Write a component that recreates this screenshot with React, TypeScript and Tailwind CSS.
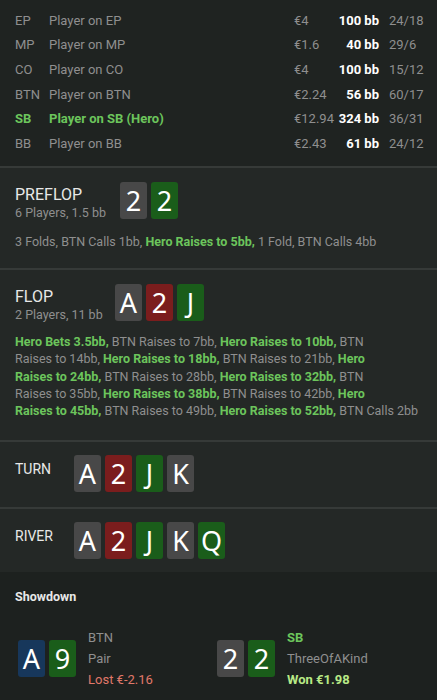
import React from 'react';

type Suit = 'gray' | 'red' | 'green' | 'blue';

const suitBg: Record<Suit, string> = {
  gray: 'bg-[#484848]',
  red: 'bg-[#7b1d1d]',
  green: 'bg-[#1a5d1a]',
  blue: 'bg-[#17375b]',
};

const players = [
  { pos: 'EP', name: 'Player on EP', stack: '€4', bb: '100 bb', stats: '24/18' },
  { pos: 'MP', name: 'Player on MP', stack: '€1.6', bb: '40 bb', stats: '29/6' },
  { pos: 'CO', name: 'Player on CO', stack: '€4', bb: '100 bb', stats: '15/12' },
  { pos: 'BTN', name: 'Player on BTN', stack: '€2.24', bb: '56 bb', stats: '60/17' },
  { pos: 'SB', name: 'Player on SB (Hero)', stack: '€12.94', bb: '324 bb', stats: '36/31', hero: true },
  { pos: 'BB', name: 'Player on BB', stack: '€2.43', bb: '61 bb', stats: '24/12' },
];

const Card = ({ rank, suit }: { rank: string; suit: Suit }) => (
  <div
    className={`w-[27px] h-[37px] rounded-[3px] flex items-center justify-center text-white text-[27px] leading-none font-['Noto_Sans',sans-serif] ${suitBg[suit]}`}
  >
    {rank}
  </div>
);

const Cards = ({ cards }: { cards: [string, Suit][] }) => (
  <div className="flex gap-[4px]">
    {cards.map(([r, s], i) => (
      <Card key={i} rank={r} suit={s} />
    ))}
  </div>
);

const Hero = ({ children }: { children: React.ReactNode }) => (
  <span className="font-bold text-[#6cc55c]">{children}</span>
);

const flop: [string, Suit][] = [['A', 'gray'], ['2', 'red'], ['J', 'green']];

const App = () => {
  return (
    <div className="w-[437px] h-[700px] flex flex-col bg-[#242826] text-[13px] text-[#8f8f8f] font-['Roboto',sans-serif] overflow-hidden">
      <div className="h-[168px] shrink-0 bg-[#1f2321] pt-[8px] border-b-2 border-[#363a38]">
        {players.map((p) => (
          <div key={p.pos} className="flex items-center h-[24.7px] px-[15px]">
            <span className={`w-[34px] ${p.hero ? 'font-bold text-[#6cc55c]' : ''}`}>{p.pos}</span>
            <span className={`flex-1 ${p.hero ? 'font-bold text-[#6cc55c]' : ''}`}>{p.name}</span>
            <span className="w-[42px]">{p.stack}</span>
            <span className="w-[43px] text-right font-bold text-white">{p.bb}</span>
            <span className="w-[43px] pl-[10px]">{p.stats}</span>
          </div>
        ))}
      </div>

      <div className="h-[102px] shrink-0 px-[15px] pt-[14px] border-b-2 border-[#363a38]">
        <div className="flex items-start">
          <div className="w-[105px]">
            <div className="text-[16px] text-[#e8e8e8] leading-[20px] pt-[3px]">PREFLOP</div>
            <div className="leading-[16px] text-[12.5px]">6 Players, 1.5 bb</div>
          </div>
          <Cards cards={[['2', 'gray'], ['2', 'green']]} />
        </div>
        <div className="mt-[12px] leading-[17px] text-[12.5px]">
          3 Folds, BTN Calls 1bb, <Hero>Hero Raises to 5bb,</Hero> 1 Fold, BTN Calls 4bb
        </div>
      </div>

      <div className="h-[172px] shrink-0 px-[15px] pt-[14px] border-b-2 border-[#363a38]">
        <div className="flex items-start">
          <div className="w-[100px]">
            <div className="text-[16px] text-[#e8e8e8] leading-[20px] pt-[3px]">FLOP</div>
            <div className="leading-[16px] text-[12.5px]">2 Players, 11 bb</div>
          </div>
          <Cards cards={flop} />
        </div>
        <div className="mt-[10px] leading-[17.3px] text-[12.5px] whitespace-nowrap">
          <div>
            <Hero>Hero Bets 3.5bb,</Hero> BTN Raises to 7bb, <Hero>Hero Raises to 10bb,</Hero> BTN
          </div>
          <div>
            Raises to 14bb, <Hero>Hero Raises to 18bb,</Hero> BTN Raises to 21bb, <Hero>Hero</Hero>
          </div>
          <div>
            <Hero>Raises to 24bb,</Hero> BTN Raises to 28bb, <Hero>Hero Raises to 32bb,</Hero> BTN
          </div>
          <div>
            Raises to 35bb, <Hero>Hero Raises to 38bb,</Hero> BTN Raises to 42bb, <Hero>Hero</Hero>
          </div>
          <div>
            <Hero>Raises to 45bb,</Hero> BTN Raises to 49bb, <Hero>Hero Raises to 52bb,</Hero> BTN Calls 2bb
          </div>
        </div>
      </div>

      <div className="h-[67px] shrink-0 px-[15px] pt-[13px] border-b-2 border-[#363a38] flex items-start">
        <div className="w-[59px] text-[14px] text-[#e8e8e8] pt-[4px]">TURN</div>
        <Cards cards={[...flop, ['K', 'gray']]} />
      </div>

      <div className="h-[63px] shrink-0 px-[15px] pt-[13px] flex items-start">
        <div className="w-[59px] text-[14px] text-[#e8e8e8] pt-[4px]">RIVER</div>
        <Cards cards={[...flop, ['K', 'gray'], ['Q', 'green']]} />
      </div>

      <div className="flex-1 bg-[#1d211f] px-[15px] pt-[17px]">
        <div className="font-bold text-[12.5px] leading-[16px] text-[#e8e8e8]">Showdown</div>
        <div className="flex mt-[22px]">
          <div className="flex items-center w-[202px] pl-[3px]">
            <Cards cards={[['A', 'blue'], ['9', 'green']]} />
            <div className="ml-[12px] leading-[21px]">
              <div>BTN</div>
              <div>Pair</div>
              <div className="text-[#e0786a]">Lost €-2.16</div>
            </div>
          </div>
          <div className="flex items-center">
            <Cards cards={[['2', 'gray'], ['2', 'green']]} />
            <div className="ml-[12px] leading-[21px]">
              <div className="font-bold text-[#6cc55c]">SB</div>
              <div>ThreeOfAKind</div>
              <div className="font-bold text-[#b8e986]">Won €1.98</div>
            </div>
          </div>
        </div>
      </div>
    </div>
  );
};

export default App;
